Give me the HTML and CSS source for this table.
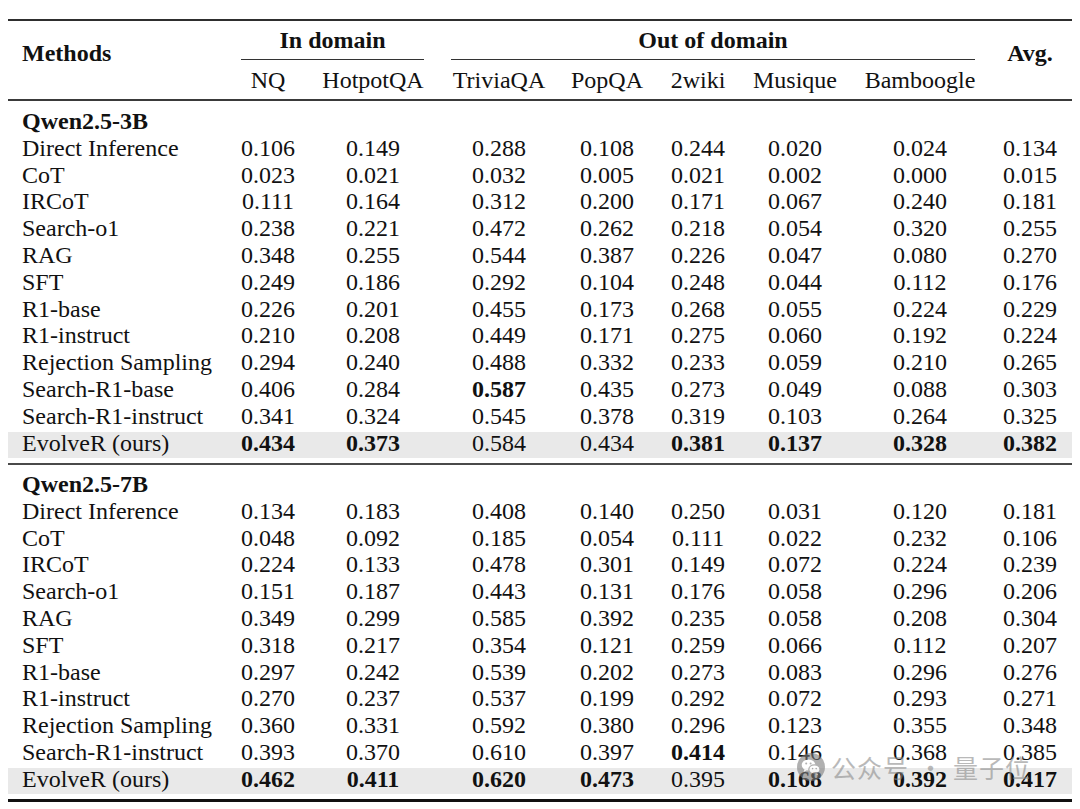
FILE: index.html
```html
<!DOCTYPE html>
<html lang="en">
<head>
<meta charset="utf-8">
<title>EvolveR results</title>
<link rel="stylesheet" href="styles.css">
</head>
<body>
<div class="page">
  <table class="results">
    <colgroup>
      <col class="c-method">
      <col class="c-nq">
      <col class="c-hotpot">
      <col class="c-trivia">
      <col class="c-pop">
      <col class="c-2wiki">
      <col class="c-musique">
      <col class="c-bamboogle">
      <col class="c-avg">
    </colgroup>
    <thead>
      <tr class="group-row">
        <th class="method-head" rowspan="2">Methods</th>
        <th class="group" colspan="2"><div class="group-label in">In domain</div></th>
        <th class="group" colspan="5"><div class="group-label out">Out of domain</div></th>
        <th class="avg-head" rowspan="2">Avg.</th>
      </tr>
      <tr class="sub-row">
        <th>NQ</th>
        <th>HotpotQA</th>
        <th>TriviaQA</th>
        <th>PopQA</th>
        <th>2wiki</th>
        <th>Musique</th>
        <th>Bamboogle</th>
      </tr>
    </thead>
    <tbody class="block first">
      <tr class="model"><td colspan="9">Qwen2.5-3B</td></tr>
      <tr><td>Direct Inference</td><td>0.106</td><td>0.149</td><td>0.288</td><td>0.108</td><td>0.244</td><td>0.020</td><td>0.024</td><td>0.134</td></tr>
      <tr><td>CoT</td><td>0.023</td><td>0.021</td><td>0.032</td><td>0.005</td><td>0.021</td><td>0.002</td><td>0.000</td><td>0.015</td></tr>
      <tr><td>IRCoT</td><td>0.111</td><td>0.164</td><td>0.312</td><td>0.200</td><td>0.171</td><td>0.067</td><td>0.240</td><td>0.181</td></tr>
      <tr><td>Search-o1</td><td>0.238</td><td>0.221</td><td>0.472</td><td>0.262</td><td>0.218</td><td>0.054</td><td>0.320</td><td>0.255</td></tr>
      <tr><td>RAG</td><td>0.348</td><td>0.255</td><td>0.544</td><td>0.387</td><td>0.226</td><td>0.047</td><td>0.080</td><td>0.270</td></tr>
      <tr><td>SFT</td><td>0.249</td><td>0.186</td><td>0.292</td><td>0.104</td><td>0.248</td><td>0.044</td><td>0.112</td><td>0.176</td></tr>
      <tr><td>R1-base</td><td>0.226</td><td>0.201</td><td>0.455</td><td>0.173</td><td>0.268</td><td>0.055</td><td>0.224</td><td>0.229</td></tr>
      <tr><td>R1-instruct</td><td>0.210</td><td>0.208</td><td>0.449</td><td>0.171</td><td>0.275</td><td>0.060</td><td>0.192</td><td>0.224</td></tr>
      <tr><td>Rejection Sampling</td><td>0.294</td><td>0.240</td><td>0.488</td><td>0.332</td><td>0.233</td><td>0.059</td><td>0.210</td><td>0.265</td></tr>
      <tr><td>Search-R1-base</td><td>0.406</td><td>0.284</td><td class="best">0.587</td><td>0.435</td><td>0.273</td><td>0.049</td><td>0.088</td><td>0.303</td></tr>
      <tr><td>Search-R1-instruct</td><td>0.341</td><td>0.324</td><td>0.545</td><td>0.378</td><td>0.319</td><td>0.103</td><td>0.264</td><td>0.325</td></tr>
      <tr class="ours"><td>EvolveR (ours)</td><td class="best">0.434</td><td class="best">0.373</td><td>0.584</td><td>0.434</td><td class="best">0.381</td><td class="best">0.137</td><td class="best">0.328</td><td class="best">0.382</td></tr>
    </tbody>
    <tbody class="block second">
      <tr class="model"><td colspan="9">Qwen2.5-7B</td></tr>
      <tr><td>Direct Inference</td><td>0.134</td><td>0.183</td><td>0.408</td><td>0.140</td><td>0.250</td><td>0.031</td><td>0.120</td><td>0.181</td></tr>
      <tr><td>CoT</td><td>0.048</td><td>0.092</td><td>0.185</td><td>0.054</td><td>0.111</td><td>0.022</td><td>0.232</td><td>0.106</td></tr>
      <tr><td>IRCoT</td><td>0.224</td><td>0.133</td><td>0.478</td><td>0.301</td><td>0.149</td><td>0.072</td><td>0.224</td><td>0.239</td></tr>
      <tr><td>Search-o1</td><td>0.151</td><td>0.187</td><td>0.443</td><td>0.131</td><td>0.176</td><td>0.058</td><td>0.296</td><td>0.206</td></tr>
      <tr><td>RAG</td><td>0.349</td><td>0.299</td><td>0.585</td><td>0.392</td><td>0.235</td><td>0.058</td><td>0.208</td><td>0.304</td></tr>
      <tr><td>SFT</td><td>0.318</td><td>0.217</td><td>0.354</td><td>0.121</td><td>0.259</td><td>0.066</td><td>0.112</td><td>0.207</td></tr>
      <tr><td>R1-base</td><td>0.297</td><td>0.242</td><td>0.539</td><td>0.202</td><td>0.273</td><td>0.083</td><td>0.296</td><td>0.276</td></tr>
      <tr><td>R1-instruct</td><td>0.270</td><td>0.237</td><td>0.537</td><td>0.199</td><td>0.292</td><td>0.072</td><td>0.293</td><td>0.271</td></tr>
      <tr><td>Rejection Sampling</td><td>0.360</td><td>0.331</td><td>0.592</td><td>0.380</td><td>0.296</td><td>0.123</td><td>0.355</td><td>0.348</td></tr>
      <tr><td>Search-R1-instruct</td><td>0.393</td><td>0.370</td><td>0.610</td><td>0.397</td><td class="best">0.414</td><td>0.146</td><td>0.368</td><td>0.385</td></tr>
      <tr class="ours"><td>EvolveR (ours)</td><td class="best">0.462</td><td class="best">0.411</td><td class="best">0.620</td><td class="best">0.473</td><td>0.395</td><td class="best">0.168</td><td class="best">0.392</td><td class="best">0.417</td></tr>
    </tbody>
  </table>

  <div class="watermark">
    <svg class="wm-icon" width="28" height="28" viewBox="0 0 28 28" aria-hidden="true">
      <circle cx="14" cy="14" r="14" fill="#7d7d7d"/>
      <ellipse cx="11.5" cy="12" rx="6.8" ry="5.6" fill="#ffffff"/>
      <path d="M7.5 16.2 L6.6 19 L9.6 17.2 Z" fill="#ffffff"/>
      <ellipse cx="17.4" cy="16.4" rx="5.6" ry="4.6" fill="#ffffff" stroke="#7d7d7d" stroke-width="1.2"/>
      <path d="M20.4 20.2 L21.4 22.4 L18.6 20.8 Z" fill="#ffffff"/>
      <circle cx="9.2" cy="10.6" r="1" fill="#7d7d7d"/>
      <circle cx="13.6" cy="10.6" r="1" fill="#7d7d7d"/>
      <circle cx="15.6" cy="15.6" r="0.8" fill="#7d7d7d"/>
      <circle cx="19.2" cy="15.6" r="0.8" fill="#7d7d7d"/>
    </svg>
    <span class="wm-text">公众号<span class="wm-dot">·</span>量子位</span>
  </div>
</div>
</body>
</html>
```

FILE: styles.css
```css
body {
  margin: 0;
  background: #ffffff;
}

.page {
  position: relative;
  width: 1080px;
  height: 809px;
  overflow: hidden;
}

.results {
  margin: 19px 0 0 8px;
  width: 1064px;
  table-layout: fixed;
  border-collapse: separate;
  border-spacing: 0;
  font-family: "Liberation Serif", "Times New Roman", serif;
  font-size: 24px;
  line-height: 26.8px;
  color: #111111;
}

.c-method { width: 228px; }
.c-nq { width: 64px; }
.c-hotpot { width: 146px; }
.c-trivia { width: 106px; }
.c-pop { width: 110px; }
.c-2wiki { width: 72px; }
.c-musique { width: 122px; }
.c-bamboogle { width: 128px; }
.c-avg { width: 88px; }

th,
td {
  padding: 0;
  text-align: center;
  white-space: nowrap;
  font-weight: normal;
}

/* header */
.group-row th {
  border-top: 2px solid #2e2e2e;
  vertical-align: top;
}

.group {
  padding-top: 5.5px;
  font-weight: bold;
}

.group-label {
  padding-bottom: 5.7px;
  border-bottom: 1px solid #333333;
}

.group-label.in {
  margin: 0 22px 0 5px;
}

.group-label.out {
  margin: 0 9px 0 5px;
}

.method-head,
.avg-head {
  font-weight: bold;
  padding-top: 18.5px;
  border-bottom: 2px solid #3a3a3a;
}

.method-head {
  text-align: left;
  padding-left: 14px;
}

.avg-head {
  padding-left: 4px;
}

.sub-row th {
  padding-top: 7.5px;
  padding-bottom: 5.2px;
  border-bottom: 2px solid #3a3a3a;
}

/* body */
.block td:first-child {
  text-align: left;
  padding-left: 14px;
}

.block td:last-child {
  padding-left: 4px;
}

.block .model td {
  font-weight: bold;
  text-align: left;
  padding-left: 14px;
}

.first .model td {
  padding-top: 6.6px;
}

.second .model td {
  padding-top: 6px;
  border-top: 2px solid #4a4a4a;
}

.best {
  font-weight: bold;
}

.ours td {
  background: linear-gradient(#e9e9e9, #e9e9e9) left 2px / 100% 26px no-repeat;
}

.first .ours td {
  padding-bottom: 6.5px;
}

.second .ours td {
  padding-bottom: 7px;
  border-bottom: 3px solid #111111;
}

/* watermark overlay */
.watermark {
  position: absolute;
  left: 797px;
  top: 752px;
  display: flex;
  align-items: center;
  gap: 6px;
  opacity: 0.6;
  pointer-events: none;
}

.wm-icon {
  display: block;
}

.wm-text {
  font-family: "Noto Sans CJK SC", "Noto Sans", sans-serif;
  font-size: 25px;
  line-height: 30px;
  letter-spacing: 1px;
  color: #8c8c8c;
}

.wm-dot {
  margin: 0 9px;
}
```
